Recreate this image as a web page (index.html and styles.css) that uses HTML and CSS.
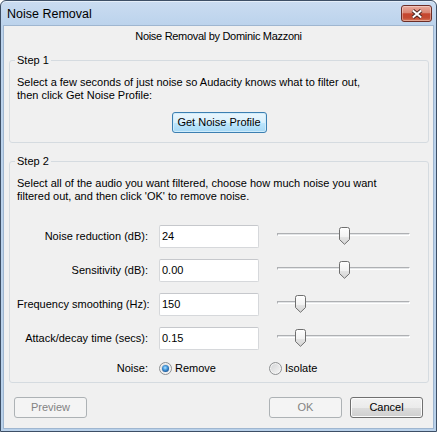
FILE: index.html
```
<!DOCTYPE html>
<html>
<head>
<meta charset="utf-8">
<title>Noise Removal</title>
<link rel="stylesheet" href="styles.css">
</head>
<body>
<div class="window">
  <div class="titlebar">
    <span class="title">Noise Removal</span>
    <span class="close">
      <svg width="12" height="10" viewBox="0 0 12 10">
        <path d="M1.8 1.5 L10.2 8.5 M10.2 1.5 L1.8 8.5" stroke="#4a2520" stroke-width="3.8" fill="none"/>
        <path d="M1.8 1.5 L10.2 8.5 M10.2 1.5 L1.8 8.5" stroke="#ffffff" stroke-width="2" fill="none"/>
      </svg>
    </span>
  </div>
  <div class="client">
    <div class="subtitle">Noise Removal by Dominic Mazzoni</div>

    <fieldset class="group step1">
      <legend>Step 1</legend>
      <p class="desc">Select a few seconds of just noise so Audacity knows what to filter out,<br>then click Get Noise Profile:</p>
      <div class="center"><button class="btn btn-default profile">Get Noise Profile</button></div>
    </fieldset>

    <fieldset class="group step2">
      <legend>Step 2</legend>
      <p class="desc">Select all of the audio you want filtered, choose how much noise you want<br>filtered out, and then click 'OK' to remove noise.</p>
      <div class="params">
        <div class="row">
          <span class="lbl">Noise reduction (dB):</span>
          <span class="field">24</span>
          <span class="slider">
            <span class="track"></span>
            <svg class="thumb" style="left:62px" width="11" height="18" viewBox="0 0 11 18">
              <defs><linearGradient id="g1" x1="0" y1="0" x2="0" y2="1"><stop offset="0" stop-color="#ffffff"/><stop offset="0.55" stop-color="#f2f2f2"/><stop offset="0.6" stop-color="#e2e2e2"/><stop offset="1" stop-color="#d6d6d6"/></linearGradient></defs>
              <path d="M0.5 2.5 Q0.5 0.5 2.5 0.5 H8.5 Q10.5 0.5 10.5 2.5 V12.5 L5.5 17.3 L0.5 12.5 Z" fill="url(#g1)" stroke="#6f6f6f"/>
            </svg>
          </span>
        </div>
        <div class="row">
          <span class="lbl">Sensitivity (dB):</span>
          <span class="field">0.00</span>
          <span class="slider">
            <span class="track"></span>
            <svg class="thumb" style="left:62px" width="11" height="18" viewBox="0 0 11 18">
              <defs><linearGradient id="g2" x1="0" y1="0" x2="0" y2="1"><stop offset="0" stop-color="#ffffff"/><stop offset="0.55" stop-color="#f2f2f2"/><stop offset="0.6" stop-color="#e2e2e2"/><stop offset="1" stop-color="#d6d6d6"/></linearGradient></defs>
              <path d="M0.5 2.5 Q0.5 0.5 2.5 0.5 H8.5 Q10.5 0.5 10.5 2.5 V12.5 L5.5 17.3 L0.5 12.5 Z" fill="url(#g2)" stroke="#6f6f6f"/>
            </svg>
          </span>
        </div>
        <div class="row">
          <span class="lbl">Frequency smoothing (Hz):</span>
          <span class="field">150</span>
          <span class="slider">
            <span class="track"></span>
            <svg class="thumb" style="left:18px" width="11" height="18" viewBox="0 0 11 18">
              <defs><linearGradient id="g3" x1="0" y1="0" x2="0" y2="1"><stop offset="0" stop-color="#ffffff"/><stop offset="0.55" stop-color="#f2f2f2"/><stop offset="0.6" stop-color="#e2e2e2"/><stop offset="1" stop-color="#d6d6d6"/></linearGradient></defs>
              <path d="M0.5 2.5 Q0.5 0.5 2.5 0.5 H8.5 Q10.5 0.5 10.5 2.5 V12.5 L5.5 17.3 L0.5 12.5 Z" fill="url(#g3)" stroke="#6f6f6f"/>
            </svg>
          </span>
        </div>
        <div class="row">
          <span class="lbl">Attack/decay time (secs):</span>
          <span class="field">0.15</span>
          <span class="slider">
            <span class="track"></span>
            <svg class="thumb" style="left:18px" width="11" height="18" viewBox="0 0 11 18">
              <defs><linearGradient id="g4" x1="0" y1="0" x2="0" y2="1"><stop offset="0" stop-color="#ffffff"/><stop offset="0.55" stop-color="#f2f2f2"/><stop offset="0.6" stop-color="#e2e2e2"/><stop offset="1" stop-color="#d6d6d6"/></linearGradient></defs>
              <path d="M0.5 2.5 Q0.5 0.5 2.5 0.5 H8.5 Q10.5 0.5 10.5 2.5 V12.5 L5.5 17.3 L0.5 12.5 Z" fill="url(#g4)" stroke="#6f6f6f"/>
            </svg>
          </span>
        </div>
        <div class="row radio-row">
          <span class="lbl">Noise:</span>
          <span class="opt opt-first"><span class="radio on"></span>Remove</span>
          <span class="opt"><span class="radio"></span>Isolate</span>
        </div>
      </div>
    </fieldset>

    <div class="footer">
      <button class="btn" disabled>Preview</button>
      <span class="spacer"></span>
      <button class="btn" disabled>OK</button>
      <button class="btn">Cancel</button>
    </div>
  </div>
</div>
</body>
</html>
```
FILE: styles.css
```
html, body {
  margin: 0;
  padding: 0;
}

body {
  width: 437px;
  height: 432px;
  font-family: "Liberation Sans", Arial, sans-serif;
  font-size: 11px;
  color: #000;
  background: #ffffff;
  overflow: hidden;
}

.window {
  box-sizing: border-box;
  width: 437px;
  height: 432px;
  border: 1px solid #3d4f66;
  border-radius: 6px 6px 0 0;
  background: linear-gradient(#cadcf1, #bcd3ec 24px, #b9d1ea);
  display: flex;
  flex-direction: column;
  overflow: hidden;
  box-shadow: inset 0 1px 0 #e4eef9;
}

.titlebar {
  height: 25px;
  flex: none;
  display: flex;
  align-items: center;
  padding: 0 4px 0 6px;
}

.title {
  flex: 1;
  font-size: 12.5px;
  color: #000;
}

.close {
  box-sizing: border-box;
  width: 31px;
  height: 17px;
  border: 1px solid #6c2d26;
  border-radius: 3px;
  background: linear-gradient(#eaaa9c, #d98673 45%, #c6452e 52%, #c44c33 80%, #d97b5d);
  box-shadow: inset 0 0 0 1px rgba(255, 255, 255, 0.35);
  display: flex;
  align-items: center;
  justify-content: center;
}

.close svg {
  display: block;
}

.client {
  flex: 1;
  margin: 0 3px 3px;
  background: #f0f0f0;
  padding-top: 4px;
  display: flex;
  flex-direction: column;
  box-shadow: 0 0 0 1px #9fb6d0;
}

.subtitle {
  text-align: center;
  line-height: 13px;
  letter-spacing: -0.3px;
  white-space: nowrap;
}

.group {
  margin: 11px 4px 0 5px;
  padding: 9px 7px 9px;
  border: 1px solid #d5dbe0;
  border-radius: 3px;
  min-width: 0;
}

.group legend {
  padding: 0 2px;
  margin-left: -2px;
  line-height: 13px;
  font-size: 11px;
}

.step2 {
  margin-top: 12px;
  padding-bottom: 7px;
}

.desc {
  margin: 0;
  line-height: 13px;
  white-space: nowrap;
}

.center {
  margin-top: 10px;
  display: flex;
  justify-content: center;
}

.btn {
  box-sizing: border-box;
  height: 21px;
  width: 73px;
  padding: 0;
  border: 1px solid #707070;
  border-radius: 3px;
  background: linear-gradient(#f2f2f2 0%, #ebebeb 50%, #dddddd 50%, #cfcfcf 100%);
  box-shadow: inset 0 0 0 1px #fbfbfb;
  font-family: "Liberation Sans", Arial, sans-serif;
  font-size: 11px;
  color: #000;
  line-height: 17px;
}

.btn-default {
  border-color: #3c7fb1;
  background: linear-gradient(#eaf6fd 0%, #d9f0fc 50%, #bee6fd 50%, #a7d9f5 100%);
  box-shadow: inset 0 0 0 1px #d0ecfb;
}

.profile {
  width: 95px;
}

.btn:disabled {
  border-color: #adb2b5;
  background: #f4f4f4;
  box-shadow: none;
  color: #838383;
}

.params {
  margin-top: 22px;
}

.row {
  display: flex;
  align-items: center;
  height: 23px;
  margin-bottom: 11px;
}

.lbl {
  flex: none;
  width: 131px;
  margin-right: 11px;
  text-align: right;
  line-height: 13px;
  white-space: nowrap;
}

.field {
  flex: none;
  box-sizing: border-box;
  width: 100px;
  height: 23px;
  padding: 0 2px;
  border: 1px solid #d6d8db;
  border-top-color: #c6c8cc;
  border-radius: 2px;
  background: #ffffff;
  line-height: 20px;
}

.slider {
  flex: none;
  position: relative;
  width: 133px;
  height: 23px;
  margin-left: 18px;
}

.track {
  display: block;
  box-sizing: border-box;
  margin-top: 8px;
  width: 133px;
  height: 3px;
  border-top: 1px solid #aeb0b3;
  border-left: 1px solid #aeb0b3;
  border-bottom: 1px solid #ffffff;
  border-right: 1px solid #ffffff;
  background: #e3e5e7;
}

.thumb {
  position: absolute;
  top: 2px;
  display: block;
}

.radio-row {
  height: 13px;
  margin-top: 12px;
  margin-bottom: 0;
}

.opt {
  display: flex;
  align-items: center;
  line-height: 13px;
  white-space: nowrap;
}

.opt-first {
  width: 110px;
}

.radio {
  box-sizing: border-box;
  width: 13px;
  height: 13px;
  margin-right: 3px;
  border: 1px solid #8e9092;
  border-radius: 50%;
  background: linear-gradient(135deg, #d2d3d5, #f7f7f7);
  box-shadow: inset 0 0 0 1px #f4f4f4;
  display: flex;
  align-items: center;
  justify-content: center;
}

.radio.on::after {
  content: "";
  width: 7px;
  height: 7px;
  border-radius: 50%;
  background: radial-gradient(circle at 45% 40%, #b5e3ff 0, #4b9ee0 35%, #1d5d9f 70%, #133f6e 100%);
}

.footer {
  display: flex;
  margin-top: 14px;
  padding: 0 10px;
}

.spacer {
  flex: 1;
}

.footer .btn + .btn {
  margin-left: 8px;
}

.footer .spacer + .btn {
  margin-left: 0;
}
```
